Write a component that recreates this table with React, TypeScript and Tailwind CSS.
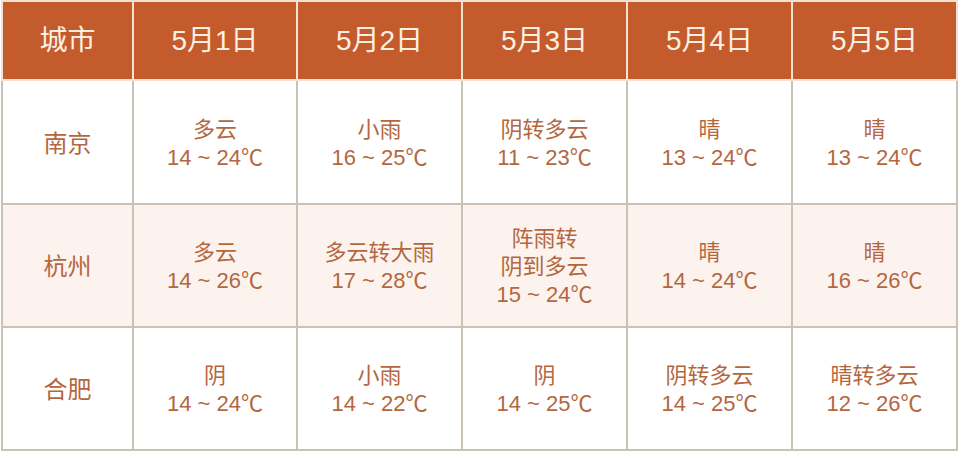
const headers = ['城市', '5月1日', '5月2日', '5月3日', '5月4日', '5月5日']

const rows: { city: string; cells: string[][]; tint?: boolean }[] = [
  {
    city: '南京',
    cells: [
      ['多云', '14 ~ 24℃'],
      ['小雨', '16 ~ 25℃'],
      ['阴转多云', '11 ~ 23℃'],
      ['晴', '13 ~ 24℃'],
      ['晴', '13 ~ 24℃'],
    ],
  },
  {
    city: '杭州',
    tint: true,
    cells: [
      ['多云', '14 ~ 26℃'],
      ['多云转大雨', '17 ~ 28℃'],
      ['阵雨转', '阴到多云', '15 ~ 24℃'],
      ['晴', '14 ~ 24℃'],
      ['晴', '16 ~ 26℃'],
    ],
  },
  {
    city: '合肥',
    cells: [
      ['阴', '14 ~ 24℃'],
      ['小雨', '14 ~ 22℃'],
      ['阴', '14 ~ 25℃'],
      ['阴转多云', '14 ~ 25℃'],
      ['晴转多云', '12 ~ 26℃'],
    ],
  },
]

const font = { fontFamily: '"Liberation Sans", "Noto Sans CJK SC", sans-serif' }

export default function App() {
  return (
    <div className="w-[960px] h-[452px] bg-white pl-[1px]" style={font}>
      <div className="grid grid-cols-[133px_164px_165px_165px_165px_165px] grid-rows-[81px_124px_123px_123px]">
        {/* Header */}
        {headers.map((h, i) => (
          <div
            key={h}
            className={
              'flex items-center justify-center bg-[#c45b2d] text-[#fdf0e2] text-[28px] font-normal border-t-2 border-b-2 border-r-2 border-[#f1e2d2] ' +
              (i === 0 ? 'border-l-2' : '')
            }
          >
            {h}
          </div>
        ))}

        {/* Body */}
        {rows.map((row) => (
          <>
            <div
              key={row.city}
              className={
                'flex items-center justify-center pt-[3px] border-l-2 border-r-2 border-b-2 border-[#cac2b4] text-[#b4673f] text-[24px] ' +
                (row.tint ? 'bg-[#fcf3ee]' : 'bg-white')
              }
            >
              {row.city}
            </div>
            {row.cells.map((lines, j) => (
              <div
                key={row.city + j}
                className={
                  'flex flex-col items-center justify-center pt-[3px] border-r-2 border-b-2 border-[#cac2b4] text-[#b4673f] text-[22px] leading-[28px] ' +
                  (row.tint ? 'bg-[#fcf3ee]' : 'bg-white')
                }
              >
                {lines.map((l) => (
                  <span key={l}>{l}</span>
                ))}
              </div>
            ))}
          </>
        ))}
      </div>
    </div>
  )
}
